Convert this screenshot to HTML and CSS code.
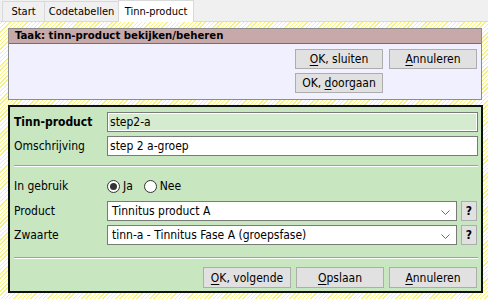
FILE: index.html
```html
<!DOCTYPE html>
<html lang="nl">
<head>
  <meta charset="UTF-8">
  <title>Tinn-product</title>
  <link rel="stylesheet" href="styles.css">
</head>
<body>
  <div class="tabs">
    <div class="tab start">Start</div>
    <div class="tab codes">Codetabellen</div>
    <div class="tab active">Tinn-product</div>
  </div>

  <div class="workspace">
    <div class="task">
      <div class="taskHead">Taak: tinn-product bekijken/beheren</div>
      <div class="taskBody">
        <div class="taskButtons">
          <button class="btn"><u>O</u>K, sluiten</button>
          <button class="btn"><u>A</u>nnuleren</button>
          <button class="btn">OK, <u>d</u>oorgaan</button>
        </div>
      </div>
    </div>

    <div class="form">
      <div class="row">
        <label class="lbl bold">Tinn-product</label>
        <div class="field readonly">step2-a</div>
      </div>
      <div class="row second">
        <label class="lbl">Omschrijving</label>
        <div class="field">step 2 a-groep</div>
      </div>

      <div class="sep"></div>

      <div class="row radioRow">
        <label class="lbl">In gebruik</label>
        <span class="radio checked"></span><span class="radioText">Ja</span>
        <span class="radio"></span><span class="radioText">Nee</span>
      </div>
      <div class="row product">
        <label class="lbl">Product</label>
        <div class="field select">
          <span>Tinnitus product A</span>
          <svg class="chev" width="9" height="5" viewBox="0 0 9 5"><path d="M0.5 0.5 L4.5 4.5 L8.5 0.5" fill="none" stroke="#707070"/></svg>
        </div>
        <button class="help">?</button>
      </div>
      <div class="row second">
        <label class="lbl">Zwaarte</label>
        <div class="field select">
          <span>tinn-a - Tinnitus Fase A (groepsfase)</span>
          <svg class="chev" width="9" height="5" viewBox="0 0 9 5"><path d="M0.5 0.5 L4.5 4.5 L8.5 0.5" fill="none" stroke="#707070"/></svg>
        </div>
        <button class="help">?</button>
      </div>

      <div class="sep low"></div>

      <div class="formButtons">
        <button class="btn"><u>O</u>K, volgende</button>
        <button class="btn"><u>O</u>pslaan</button>
        <button class="btn"><u>A</u>nnuleren</button>
      </div>
    </div>
  </div>
</body>
</html>
```

FILE: styles.css
```css
* {
  margin: 0;
  padding: 0;
  box-sizing: border-box;
}
html,
body {
  width: 488px;
  height: 299px;
  overflow: hidden;
  background-color: #f0f0f0;
  font-family: "DejaVu Sans Condensed", "DejaVu Sans", sans-serif;
  font-size: 11px;
  color: #000;
}

/* tab strip */
.tabs {
  height: 22px;
  display: flex;
  align-items: flex-end;
  padding-left: 2px;
  border-bottom: 1px solid #d9d9d9;
}
.tab {
  height: 20px;
  display: flex;
  align-items: center;
  justify-content: center;
  border: 1px solid #d9d9d9;
  border-bottom: none;
  margin-right: -1px;
  font-size: 11px;
  background-color: #f0f0f0;
}
.tab.start {
  width: 43px;
}
.tab.codes {
  width: 75px;
}
.tab.active {
  width: 76px;
  height: 22px;
  margin-bottom: -1px;
  background-color: #fff;
  position: relative;
}

/* hatched work area */
.workspace {
  height: 277px;
  padding: 6px 5px 6px 8px;
  display: flex;
  flex-direction: column;
  gap: 5px;
  background: repeating-linear-gradient(-45deg, #fff 0 2px, #f4f17c 2px 3px);
}

/* task panel */
.task {
  height: 72px;
  margin-right: 1px;
  border: 1px solid #8c8c8c;
  background-color: #f0f0ff;
}
.taskHead {
  height: 15px;
  padding-left: 6px;
  line-height: 14px;
  font-weight: bold;
  font-size: 11.3px;
  background-color: #c8a9a9;
  border-bottom: 1px solid #7d6a6a;
}
.taskButtons {
  display: grid;
  grid-template-columns: 88px 88px;
  column-gap: 6px;
  row-gap: 4px;
  justify-content: end;
  padding: 5px 4px 0 0;
}

.btn {
  height: 20px;
  font-family: inherit;
  font-size: 12px;
  color: #000;
  background-color: #e1e1e1;
  border: 1px solid #adadad;
}
.btn u {
  text-decoration-thickness: 1px;
  text-underline-offset: 2px;
}

/* green form */
.form {
  flex: 1;
  display: flex;
  flex-direction: column;
  border: 2px solid #111;
  background-color: #c8e6c0;
  padding: 5px 3px 0 4px;
}
.row {
  height: 20px;
  display: flex;
  align-items: center;
}
.row.second {
  margin-top: 4px;
}
.row.product {
  margin-top: 5px;
}
.lbl {
  width: 93px;
  font-size: 12px;
}
.bold {
  font-weight: bold;
}
.field {
  flex: 1;
  height: 20px;
  display: flex;
  align-items: center;
  padding-left: 2px;
  font-size: 12px;
  background-color: #fff;
  border: 1px solid #7a7a7a;
}
.field.readonly {
  background-color: #d4ebd0;
  box-shadow: inset 0 0 0 1px #fff;
}
.field.select {
  justify-content: space-between;
  padding-right: 6px;
  padding-left: 4px;
}
.chev {
  margin-top: 2px;
}
.help {
  width: 16px;
  height: 20px;
  margin-left: 4px;
  margin-right: 1px;
  font-family: inherit;
  font-weight: bold;
  font-size: 12px;
  background-color: #e1e1e1;
  border: 1px solid #adadad;
}

.sep {
  height: 2px;
  flex: none;
  margin: 9px 0 9px;
  border-top: 1px solid #a0a0a0;
  border-bottom: 1px solid #fff;
}
.sep.low {
  margin: 12px 0 8px;
}

.radio {
  width: 13px;
  height: 13px;
  border-radius: 50%;
  border: 1px solid #333;
  background-color: #fff;
  display: flex;
  align-items: center;
  justify-content: center;
}
.radio.checked::after {
  content: "";
  width: 7px;
  height: 7px;
  border-radius: 50%;
  background-color: #333;
}
.radioText {
  margin: 0 11px 0 3px;
  font-size: 12px;
}

.formButtons {
  display: flex;
  justify-content: flex-end;
  gap: 5px;
  padding-right: 1px;
}
.formButtons .btn {
  width: 88px;
  height: 21px;
}
```
